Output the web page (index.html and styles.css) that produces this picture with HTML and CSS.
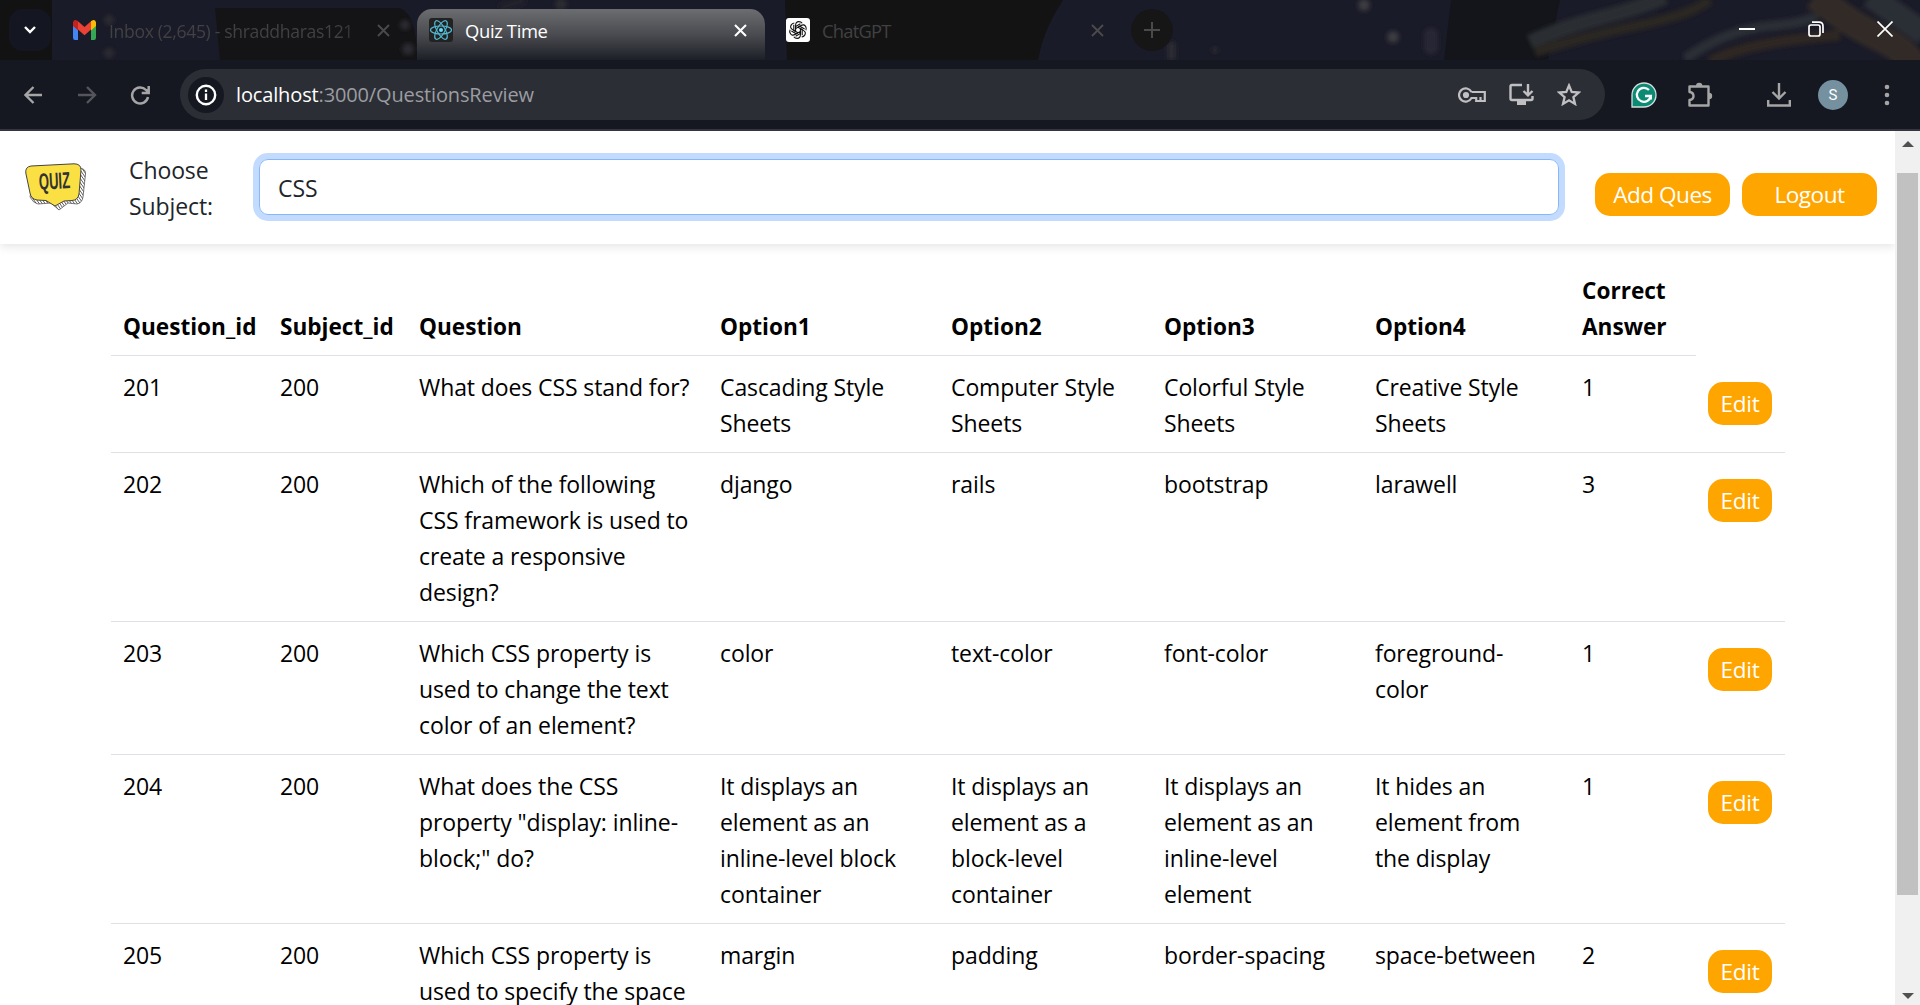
FILE: index.html
```html
<!DOCTYPE html>
<html lang="en">
<head>
<meta charset="utf-8">
<title>Quiz Time</title>
<link rel="stylesheet" href="styles.css">
</head>
<body>
<header class="tabstrip">
  <svg class="theme" width="1920" height="60" viewBox="0 0 1920 60">
    <defs><filter id="soft" x="-10%" y="-30%" width="120%" height="160%"><feGaussianBlur stdDeviation="2.200"/></filter></defs>
    <rect width="1920" height="60" fill="#1a1b28"/>
    <rect width="52" height="60" fill="#121212"/>
    <path d="M215 8H400Q417 14 417 60H220Z" fill="#141416"/>
    <path d="M785 0H1063Q1043 30 1038 60H787Z" fill="#131313"/>
    <path d="M1451 0H1560L1548 60H1444Z" fill="#14151a"/>
    <g fill="none" filter="url(#soft)">
      <path d="M1530 42Q1560 28 1600 18T1665-3" stroke="#2a2d33" stroke-width="15"/>
      <path d="M1535 52Q1590 35 1640 25T1710 0" stroke="#2b2523" stroke-width="10"/>
      <path d="M1685 59Q1725 30 1770 26T1815 14" stroke="#2b2f35" stroke-width="10"/>
      <path d="M1710 62Q1745 42 1840 35" stroke="#2d2623" stroke-width="11"/>
      <path d="M1815-4Q1850 24 1880 38T1915 70" stroke="#302a28" stroke-width="28"/>
      <path d="M1870-4L1925 34" stroke="#2a2e35" stroke-width="24"/>
      <path d="M500 8L525 0" stroke="#22222a" stroke-width="8"/>
    </g>
    <g fill="#2a2a31" filter="url(#soft)">
      <circle cx="561" cy="4" r="6"/><circle cx="1364" cy="5" r="6" fill="#3a3a40"/><circle cx="1393" cy="37" r="6" fill="#3a3a40"/>
      <rect x="1424" y="28" width="14" height="26" rx="6" fill="#282636"/><circle cx="109" cy="20" r="5"/><circle cx="109" cy="53" r="5"/>
      <rect x="1167" y="42" width="9" height="18"/><circle cx="1215" cy="50" r="3"/><circle cx="405" cy="25" r="5"/><circle cx="408" cy="49" r="6"/>
    </g>
  </svg>
  <div class="tabs">
    <div class="tabsearch"><svg width="14" height="10" viewBox="0 0 14 10"><path d="M2 2l5 5 5-5" fill="none" stroke="#fff" stroke-width="2.4"/></svg></div>
    <div class="tab inbox">
      <svg width="23" height="20" viewBox="0 0 23 17" preserveAspectRatio="none"><path d="M0 2v13q0 2 2 2h3V6z" fill="#4285f4"/><path d="M18 6v11h3q2 0 2-2V2z" fill="#34a853"/><path d="M5 1v7l6.500 5L18 8V1l-6.500 5z" fill="#ea4335"/><path d="M0 2v3l5 4V1L4 .5Q1-.8 0 2" fill="#c5221f"/><path d="M23 2v3l-5 4V1l1-.5q3-1.300 4 1.500" fill="#fbbc04"/></svg>
      <span class="title fade">Inbox (2,645) - shraddharas121</span>
      <svg class="close" width="13" height="13" viewBox="0 0 13 13"><path d="M1 1l11 11M12 1L1 12"/></svg>
    </div>
    <div class="tab active">
      <svg width="24" height="24" viewBox="0 0 24 24"><rect width="24" height="24" rx="3" fill="#222"/><g fill="none" stroke="#53b9d4" stroke-width="1.200"><ellipse cx="12" cy="12" rx="10.500" ry="4"/><ellipse cx="12" cy="12" rx="10.500" ry="4" transform="rotate(60 12 12)"/><ellipse cx="12" cy="12" rx="10.500" ry="4" transform="rotate(120 12 12)"/></g><circle cx="12" cy="12" r="2" fill="#61dafb"/></svg>
      <span class="title">Quiz Time</span>
      <svg class="close" width="13" height="13" viewBox="0 0 13 13"><path d="M1 1l11 11M12 1L1 12"/></svg>
    </div>
    <div class="tab gpt">
      <svg width="24" height="24" viewBox="0 0 24 24"><rect width="24" height="24" rx="3" fill="#fff"/><g fill="none" stroke="#111" stroke-width="1.100"><path id="petal" d="M9.600 13.400V7.600Q9.600 3.600 12.800 3.600 15 3.600 16.200 5.300M9.600 13.400L7.800 12.400V6.800"/><use href="#petal" transform="rotate(60 12 12)"/><use href="#petal" transform="rotate(120 12 12)"/><use href="#petal" transform="rotate(180 12 12)"/><use href="#petal" transform="rotate(240 12 12)"/><use href="#petal" transform="rotate(300 12 12)"/></g></svg>
      <span class="title">ChatGPT</span>
      <svg class="close" width="13" height="13" viewBox="0 0 13 13"><path d="M1 1l11 11M12 1L1 12"/></svg>
    </div>
    <div class="newtab"><svg width="16" height="16" viewBox="0 0 16 16"><path d="M8 0v16M0 8h16" stroke="#4a4a4c" stroke-width="2"/></svg></div>
    <div class="winbtns">
      <svg width="16" height="16" viewBox="0 0 16 16"><path d="M0 8h16" stroke="#fff" stroke-width="2"/></svg>
      <svg width="16" height="16" viewBox="0 0 16 16" fill="none" stroke="#fff" stroke-width="1.700"><rect x="1" y="4" width="11" height="11" rx="2"/><path d="M4 1.200h7q4 0 4 4V12"/></svg>
      <svg width="16" height="16" viewBox="0 0 16 16"><path d="M.5.5l15 15M15.500.5l-15 15" stroke="#fff" stroke-width="1.700"/></svg>
    </div>
  </div>
</header>
<div class="toolbar">
  <div class="nav">
    <svg width="20" height="20" viewBox="0 0 20 20" fill="none" stroke="#a5a5a5" stroke-width="2.400"><path d="M9.500 2l-8 8 8 8M2 10h16"/></svg>
    <svg width="20" height="20" viewBox="0 0 20 20" fill="none" stroke="#55565b" stroke-width="2.400"><path d="M10 2l8 8-8 8M18 10H1"/></svg>
    <svg width="20" height="20" viewBox="0 0 20 20" fill="none" stroke="#a5a5a5" stroke-width="2.500"><path d="M18 12A8 8 0 1 1 16 5l2.500 2.500M18.700 1v7h-7"/></svg>
  </div>
  <div class="omnibox">
    <div class="info"><svg width="22" height="22" viewBox="0 0 22 22"><circle cx="11" cy="11" r="9.200" fill="none" stroke="#fff" stroke-width="2.400"/><path d="M11 9.500v6.500M11 5.500v2.500" stroke="#fff" stroke-width="2.300"/></svg></div>
    <span class="url"><b>localhost</b>:3000/QuestionsReview</span>
    <div class="omniicons">
      <svg width="28" height="16" viewBox="0 0 28 16" fill="none" stroke="#c0c0c3" stroke-width="2.200"><path d="M13.500 5A6.600 6.600 0 1 0 13.500 11H17.500M13.500 5H26.800V14H18.200V10M22.500 10v4"/><circle cx="8" cy="8" r="2" fill="#c0c0c3"/></svg>
      <svg width="25" height="23" viewBox="0 0 25 23" fill="none" stroke="#c0c0c3" stroke-width="2.400"><path d="M13 2H3q-1.500 0-1.500 1.500v12Q1.500 17 3 17h19q1.500 0 1.500-1.500V13M19 1v11M14.500 8L19 12.300 23.500 8"/><path d="M8 20h9" stroke-width="4"/></svg>
      <svg width="24" height="23" viewBox="0 0 24 23" fill="none" stroke="#c0c0c3" stroke-width="2.300"><path d="M12 2.500l2.700 6.400 7 .6-5.300 4.600 1.600 6.800-6-3.600-6 3.600 1.600-6.800-5.300-4.600 7-.6z"/></svg>
    </div>
  </div>
  <div class="extensions">
    <svg width="26" height="26" viewBox="0 0 26 26"><path d="M1 25V13A12 12 0 1 1 13 25z" fill="#0b8a74" stroke="#d6dfdd" stroke-width="1.300"/><path d="M18 8A7 7 0 1 0 19.800 14H14M19.800 13V17.500" fill="none" stroke="#fff" stroke-width="2.300"/></svg>
    <svg width="26" height="26" viewBox="0 0 26 26"><path d="M2.500 4.500h19V23.500h-19v-5.500q4-.5 4-4t-4-4z" fill="none" stroke="#a5a5a5" stroke-width="2.400" stroke-linejoin="round"/><path d="M9 4a3.200 3.200 0 0 1 6.400 0zM22 10.800a3.200 3.200 0 0 1 0 6.400z" fill="#a5a5a5"/></svg>
    <svg width="24" height="25" viewBox="0 0 24 25" fill="none" stroke="#a5a5a5" stroke-width="2.400"><path d="M12 1v15M5.500 10l6.500 6.500 6.500-6.500M1.200 18v5.500h21.600V18"/></svg>
    <span class="avatar">S</span>
    <svg width="6" height="22" viewBox="0 0 6 22" fill="#a5a5a5"><circle cx="3" cy="3" r="2.300"/><circle cx="3" cy="11" r="2.300"/><circle cx="3" cy="19" r="2.300"/></svg>
  </div>
</div>
<div class="viewport">
  <main class="page">
    <nav class="navbar">
      <svg class="logo" width="62" height="48" viewBox="0 0 62 48">
        <defs><pattern id="hatch" width="2.400" height="2.400" patternUnits="userSpaceOnUse" patternTransform="rotate(-35)"><rect width="2.400" height="2.400" fill="#fff"/><path d="M0 0V2.400" stroke="#333" stroke-width="1.300"/></pattern></defs>
        <path d="M10 8L55 5q6 1 5.500 6L58 34q-1 6-6 7l-9-1-9 7-8-7-13 1q-5-1-8-7z" fill="url(#hatch)" stroke="#444" stroke-width=".7"/>
        <path d="M6 3L49 .8q7 0 7 6L54 31q-1 6-7 6.500l-8 .5-9 5-9-5.500-9-.5Q6 36 5 30L.8 10Q0 4 6 3z" fill="#fbe043" stroke="#444" stroke-width="1"/>
        <text x="17" y="20" class="logotext" textLength="38" lengthAdjust="spacingAndGlyphs" transform="rotate(-3 30 20) scale(.82 1.300)">QUIZ</text>
      </svg>
      <label class="choose">Choose<br>Subject:</label>
      <div class="select">CSS</div>
      <div class="actions"><button class="btn">Add Ques</button><button class="btn">Logout</button></div>
    </nav>
    <table class="questions">
      <colgroup><col class="c1"><col class="c2"><col class="c3"><col class="c4"><col class="c5"><col class="c6"><col class="c7"><col class="c8"><col class="c9"></colgroup>
      <thead><tr><th>Question_id</th><th>Subject_id</th><th>Question</th><th>Option1</th><th>Option2</th><th>Option3</th><th>Option4</th><th>Correct<br>Answer</th></tr></thead>
      <tbody>
        <tr><td>201</td><td>200</td><td>What does CSS stand for?</td><td>Cascading Style<br>Sheets</td><td>Computer Style<br>Sheets</td><td>Colorful Style<br>Sheets</td><td>Creative Style<br>Sheets</td><td>1</td><td><button class="btn edit">Edit</button></td></tr>
        <tr><td>202</td><td>200</td><td>Which of the following<br>CSS framework is used to<br>create a responsive<br>design?</td><td>django</td><td>rails</td><td>bootstrap</td><td>larawell</td><td>3</td><td><button class="btn edit">Edit</button></td></tr>
        <tr><td>203</td><td>200</td><td>Which CSS property is<br>used to change the text<br>color of an element?</td><td>color</td><td>text-color</td><td>font-color</td><td>foreground-<br>color</td><td>1</td><td><button class="btn edit">Edit</button></td></tr>
        <tr><td>204</td><td>200</td><td>What does the CSS<br>property "display: inline-<br>block;" do?</td><td>It displays an<br>element as an<br>inline-level block<br>container</td><td>It displays an<br>element as a<br>block-level<br>container</td><td>It displays an<br>element as an<br>inline-level<br>element</td><td>It hides an<br>element from<br>the display</td><td>1</td><td><button class="btn edit">Edit</button></td></tr>
        <tr><td>205</td><td>200</td><td>Which CSS property is<br>used to specify the space</td><td>margin</td><td>padding</td><td>border-spacing</td><td>space-between</td><td>2</td><td><button class="btn edit">Edit</button></td></tr>
      </tbody>
    </table>
  </main>
  <aside class="scrollbar">
    <svg width="12" height="6" viewBox="0 0 12 6"><path d="M0 6l6-6 6 6z" fill="#505050"/></svg>
    <div class="thumb"></div>
    <svg width="12" height="6" viewBox="0 0 12 6"><path d="M0 0l6 6 6-6z" fill="#505050"/></svg>
  </aside>
</div>
</body>
</html>
```
FILE: styles.css
```css
* { box-sizing: border-box; }
body { margin: 0; width: 1920px; height: 1005px; overflow: hidden; display: flex; flex-direction: column; background: #fff; font-family: "Open Sans", "Noto Sans", sans-serif; }
svg { display: block; flex: none; }

.tabstrip { height: 60px; position: relative; flex: none; }
.theme { position: absolute; left: 0; top: 0; }
.tabs { position: relative; display: flex; height: 60px; padding-left: 9px; align-items: flex-start; }
.tabsearch { margin-top: 9px; width: 42px; height: 42px; border-radius: 14px; background: #141722; display: flex; align-items: center; justify-content: center; }
.tab { display: flex; align-items: center; height: 42px; margin-top: 9px; color: #414143; font-size: 18.4px; }
.title { flex: 1; white-space: nowrap; letter-spacing: -0.35px; padding-top: 1px; }
.close { fill: none; stroke: #4a4a4a; stroke-width: 1.9; }
.inbox { width: 366px; padding: 0 27px 0 22px; gap: 13px; font-size: 17.6px; }
.fade { letter-spacing: -0.35px; -webkit-mask-image: linear-gradient(90deg, #000 90%, rgba(0, 0, 0, .4)); mask-image: linear-gradient(90deg, #000 90%, rgba(0, 0, 0, .4)); }
.active { width: 348px; height: 57px; padding: 0 18px 15px 12px; gap: 12px; color: #fff; background: linear-gradient(#6c6d70, #4a4b50 45%, #171a22 95%); border-radius: 15px 15px 0 0; }
.active .close { stroke: #fff; stroke-width: 2.1; }
.gpt { width: 358px; padding: 0 19px 0 21px; gap: 12px; }
.gpt .title { letter-spacing: -0.8px; }
.newtab { margin: 9px 0 0 8px; width: 42px; height: 42px; border-radius: 50%; background: #161617; display: flex; align-items: center; justify-content: center; }
.winbtns { display: flex; gap: 53px; margin: 21px 27px 0 auto; }

.toolbar { height: 71px; flex: none; display: flex; align-items: center; background: #151821; border-bottom: 2px solid #33353f; position: relative; }
.nav { width: 180px; display: flex; gap: 33px; padding-left: 24px; }
.omnibox { width: 1425px; height: 51px; border-radius: 26px; background: #2c2e36; display: flex; align-items: center; padding: 0 24px 0 8px; }
.info { width: 36px; height: 36px; border-radius: 50%; background: #151821; display: flex; align-items: center; justify-content: center; }
.url { flex: 1; margin-left: 12px; font-size: 20px; letter-spacing: -0.14px; color: #9b9da1; }
.url b { font-weight: 400; color: #fff; }
.omniicons { display: flex; align-items: center; gap: 23px; }
.extensions { flex: 1; display: flex; align-items: center; padding: 0 30px 0 26px; }
.extensions svg:nth-child(2) { margin-left: 30px; }
.extensions svg:nth-child(3) { margin-left: 54px; }
.avatar { width: 30px; height: 30px; border-radius: 50%; background: #7591a0; color: #fff; font: 15px/30px Roboto, sans-serif; text-align: center; margin: 0 0 0 27px; }
.extensions svg:last-child { margin-left: auto; }

.viewport { flex: 1; display: flex; min-height: 0; }
.page { flex: 1; overflow: hidden; }
.navbar { height: 113px; display: flex; align-items: flex-start; padding-left: 25px; box-shadow: 0 3px 9px rgba(0, 0, 0, .1); font-size: 23px; color: #212529; }
.logo { margin-top: 32px; }
.logotext { font: bold 18px "Liberation Sans", sans-serif; fill: #333; }
.choose { margin: 21px 0 0 42px; width: 130px; line-height: 36px; letter-spacing: -0.1px; }
.select { margin-top: 28px; width: 1300px; height: 56px; border: 1px solid #86b7fe; border-radius: 9px; box-shadow: 0 0 0 6px #c2dbfe; padding-left: 18px; line-height: 56px; }
.actions { display: flex; gap: 12px; margin: 42px 0 0 36px; }
.btn { width: 135px; height: 43px; border: 0; border-radius: 15px; background: orange; color: #fff; font: 22.6px/43px "Open Sans", sans-serif; letter-spacing: -0.5px; padding: 0; white-space: nowrap; }
.edit { display: block; width: 64px; margin-top: 13px; letter-spacing: -0.3px; }

.questions { table-layout: fixed; width: 1674px; margin: 15px 0 0 111px; border-collapse: separate; border-spacing: 0; font-size: 23px; letter-spacing: -0.1px; line-height: 36px; color: #000; }
.questions td { padding: 13px 0 11px 12px; vertical-align: top; }
.questions th { padding: 14px 0 10px 12px; vertical-align: bottom; font-weight: 700; font-size: 22.6px; letter-spacing: 0; }
.questions th, .questions td { text-align: left; border-bottom: 1px solid #dee2e6; white-space: nowrap; }
.c1 { width: 157px; } .c2 { width: 139px; } .c3 { width: 301px; } .c4 { width: 231px; } .c5 { width: 213px; } .c6 { width: 211px; } .c7 { width: 207px; } .c8 { width: 126px; } .c9 { width: 89px; }

.scrollbar { width: 25px; background: #f0f0f0; display: flex; flex-direction: column; align-items: center; padding: 10px 0 6px; }
.thumb { width: 21px; height: 722px; margin: 26px 0 auto; background: #c1c1c1; }
```
